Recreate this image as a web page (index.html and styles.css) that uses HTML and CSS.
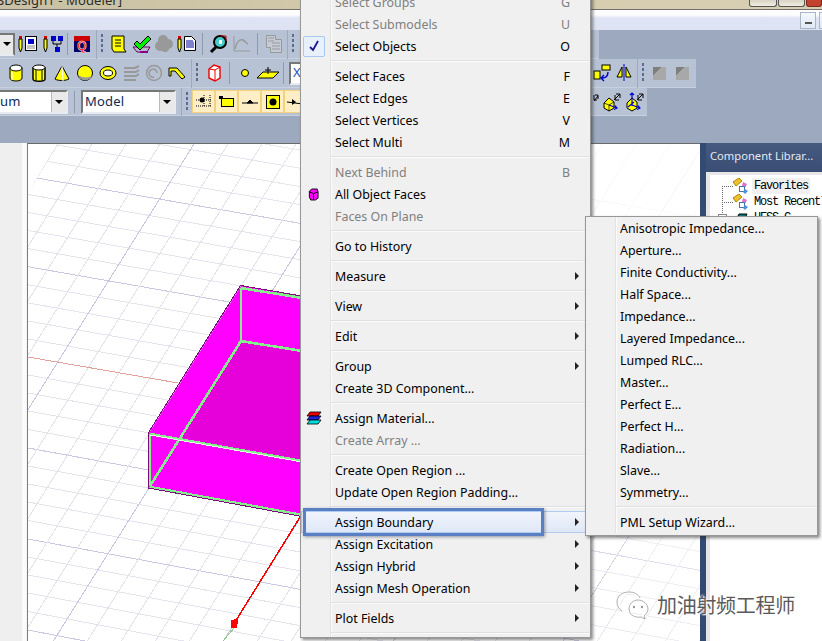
FILE: index.html
```html
<!DOCTYPE html>
<html lang="en">
<head>
<meta charset="utf-8">
<title>HFSS Modeler</title>
<link rel="stylesheet" href="styles.css">
</head>
<body>
<div class="app">
  <header class="titlebar">
    <span class="title-text">SDesign1 - Modeler]</span>
    <div class="win-btns"><i class="win-btn"></i><i class="win-btn wide"></i><i class="win-btn close"></i></div>
  </header>
  <div class="menustrip">
    <div class="mdi-btn"><i class="mdi-dash"></i></div><div class="mdi-btn"></div>
  </div>
  <div class="toolarea">
    <div class="tb-row r1">
      <div class="band b1">
        <div class="combo c0"><span class="drop"><i class="tri"></i></span></div>
        <span class="cell"><svg class="ic" viewBox="0 0 20 20"><rect x="1" y="2" width="3" height="3" fill="#d00"/><path d="M1 5h3v9l-1.500 4L1 14z" fill="#ff0" stroke="#000"/><rect x="7.500" y="2.500" width="11" height="14" fill="#fff" stroke="#000"/><rect x="10" y="5" width="6" height="5" fill="#00c"/><path d="M9 12h8M9 14h8" stroke="#888"/></svg></span>
        <span class="cell"><svg class="ic" viewBox="0 0 20 20"><rect x="1" y="2" width="3" height="3" fill="#d00"/><path d="M1 5h3v9l-1.500 4L1 14z" fill="#ff0" stroke="#000"/><path d="M10 7v3h8V7M14 10v4" fill="none" stroke="#000"/><rect x="8" y="2" width="5" height="5" fill="#00c"/><rect x="15" y="2" width="5" height="5" fill="#00c"/><rect x="12" y="13" width="5" height="5" fill="#00c"/></svg></span>
        <span class="sep s4"></span>
        <span class="cell"><svg class="ic" viewBox="0 0 20 20"><rect x="2" y="2" width="16" height="16" fill="#006"/><rect x="2" y="2" width="16" height="5" fill="#c00"/><text x="10" y="15.500" class="q-glyph">Q</text></svg></span>
      </div>
      <div class="band b2">
        <span class="grip g9"></span>
        <span class="cell"><svg class="ic" viewBox="0 0 20 20"><path d="M4 2h12v13l2 3H6l-2-3z" fill="#ff0" stroke="#000"/><path d="M7 6h6M7 9h6M7 12h6" stroke="#000"/></svg></span>
        <span class="cell"><svg class="ic" viewBox="0 0 20 20"><path d="M2 13l4 5h10l3-5z" fill="#b9b9c9" stroke="#606"/><path d="M3 10l3-3 3 3 8-8 3 3-11 11z" fill="#0e0" stroke="#000"/><path d="M9 18h8" stroke="#808" stroke-width="2"/></svg></span>
        <span class="cell"><svg class="ic" viewBox="0 0 20 20"><g fill="#999"><circle cx="9" cy="6" r="5"/><circle cx="14" cy="10" r="5"/><circle cx="6" cy="12" r="5"/><circle cx="11" cy="14" r="4"/></g></svg></span>
        <span class="cell"><svg class="ic" viewBox="0 0 20 20"><rect x="1" y="2" width="3" height="3" fill="#d00"/><path d="M1 5h3v9l-1.500 4L1 14z" fill="#ff0" stroke="#000"/><path d="M7.500 2.500h7l4 4v10h-11z" fill="#fff" stroke="#000"/><path d="M9 7h7M9 9h8M9 11h8M9 13h8" stroke="#009"/></svg></span>
        <span class="sep s8"></span>
        <span class="cell"><svg class="ic" viewBox="0 0 20 20"><path d="M3 18l5-5" stroke="#000" stroke-width="3"/><circle cx="12" cy="8" r="6" fill="#4cc" stroke="#000" stroke-width="2"/><path d="M12 2h6v5" fill="none" stroke="#a00"/><rect x="11" y="6" width="3" height="4" fill="#fff"/></svg></span>
        <span class="cell"><svg class="ic" viewBox="0 0 20 20"><path d="M3 2v15h16" fill="none" stroke="#999"/><path d="M4 15c2-9 6-10 8-9s3 3 5 4" fill="none" stroke="#999" stroke-width="1.500"/></svg></span>
        <span class="sep s10"></span>
        <span class="cell"><svg class="ic" viewBox="0 0 20 20"><path d="M2.500 1.500h9v4h6v13h-11v-5h-4z" fill="#c5cbd6" stroke="#999"/><path d="M4 4h6M4 7h6M8 9h8M8 12h8M8 15h8" stroke="#999"/></svg></span>
      </div>
      <div class="band b2b"><span class="grip g10"></span></div>
    </div>
    <div class="tb-row r2">
      <div class="band b3">
        <span class="cell"><svg class="ic" viewBox="0 0 20 20"><path d="M4 5v10c0 4 12 4 12 0V5z" fill="#ff0" stroke="#000"/><ellipse cx="10" cy="5" rx="6" ry="3" fill="#fff" stroke="#000"/><path d="M6 9v8" stroke="#fff"/></svg></span>
        <span class="cell"><svg class="ic" viewBox="0 0 20 20"><path d="M4 5v11c0 3 12 3 12 0V5z" fill="#ff0" stroke="#000" stroke-width="1.500"/><ellipse cx="10" cy="4.500" rx="6" ry="2.500" fill="#fff" stroke="#000"/><path d="M7 7v11M13 7v11" stroke="#000"/></svg></span>
        <span class="cell"><svg class="ic" viewBox="0 0 20 20"><path d="M10 3L3 16c3 2 10 2 14 0z" fill="#ff0" stroke="#000"/><path d="M10 3l1 15" stroke="#fff"/></svg></span>
        <span class="cell"><svg class="ic" viewBox="0 0 20 20"><circle cx="10" cy="10" r="7.500" fill="#ff0" stroke="#000"/><path d="M3 12c2 7 12 7 14 1-4 2-10 2-14-1z" fill="#999"/></svg></span>
        <span class="cell"><svg class="ic" viewBox="0 0 20 20"><ellipse cx="10" cy="10" rx="8" ry="6.500" fill="#ff0" stroke="#000"/><ellipse cx="10" cy="10" rx="4.500" ry="3" fill="#fff" stroke="#000"/></svg></span>
        <span class="cell"><svg class="ic" viewBox="0 0 20 20"><path d="M3 5h11l4-2M3 9h12l3-2M3 13h12l3-2M3 17h12" fill="none" stroke="#999" stroke-width="2"/></svg></span>
        <span class="cell"><svg class="ic" viewBox="0 0 20 20"><circle cx="10" cy="10" r="7.500" fill="none" stroke="#999" stroke-width="1.500"/><path d="M10 14a4 4 0 1 1 3-4" fill="none" stroke="#999" stroke-width="1.500"/></svg></span>
        <span class="cell"><svg class="ic" viewBox="0 0 20 20"><path d="M2 5h8l8 9-3 2-7-8H4v5H2z" fill="#ff0" stroke="#000"/></svg></span>
      </div>
      <div class="band b4">
        <span class="grip g10"></span>
        <span class="cell"><svg class="ic" viewBox="0 0 20 20"><path d="M5 6l5-4 6 2v11l-5 3-6-3z" fill="#fff" stroke="#e00" stroke-width="1.400"/><path d="M11 7v11M5 6l6 1 5-3" fill="none" stroke="#e00"/></svg></span>
        <span class="sep s8"></span>
        <span class="cell"><svg class="ic" viewBox="0 0 20 20"><circle cx="10" cy="10" r="3.500" fill="#ff0" stroke="#000"/></svg></span>
        <span class="cell"><svg class="ic wide-ic" viewBox="0 0 24 20"><path d="M1 15l6-6h16l-6 6z" fill="#ff0" stroke="#000"/><path d="M12 11V4M9 7h6" stroke="#000"/></svg></span>
        <span class="sep s8"></span>
        <div class="coord">X</div>
        <div class="band-end">
          <span class="cell"><svg class="ic" viewBox="0 0 20 20"><rect x="3" y="8" width="6" height="8" fill="#ff0" stroke="#000"/><rect x="11" y="2" width="8" height="5" fill="#ff0" stroke="#000"/><path d="M17 9c0 4-2 6-6 6m2-3l-3 3 3 3" fill="none" stroke="#00c" stroke-width="1.400"/></svg></span>
          <span class="cell"><svg class="ic" viewBox="0 0 20 20"><path d="M8 4v10H3z" fill="#ff0" stroke="#000"/><path d="M12 4v10h5z" fill="#ff0" stroke="#000"/><path d="M10 1v17" stroke="#00c"/></svg></span>
        </div>
      </div>
      <div class="band b5">
        <span class="grip g10"></span>
        <span class="cell"><i class="gray-sq"></i></span>
        <span class="cell"><i class="gray-sq"></i></span>
      </div>
    </div>
    <div class="tb-row r3">
      <div class="band b6">
        <div class="combo c1"><span class="combo-text">um</span><span class="drop"><i class="tri"></i></span></div>
        <span class="sep s13"></span>
        <div class="combo c2"><span class="combo-text">Model</span><span class="drop"><i class="tri"></i></span></div>
      </div>
      <div class="band b7">
        <span class="grip g10"></span>
        <span class="ybtn"><svg class="ic" viewBox="0 0 20 20"><path d="M2 8h16M10 3v12M2 14h16M16 3v12" stroke="#000" stroke-dasharray="1 1" fill="none"/><circle cx="8" cy="8" r="2.500" fill="#000"/></svg></span>
        <span class="ybtn"><svg class="ic" viewBox="0 0 20 20"><rect x="4.500" y="6.500" width="12" height="8" fill="#ff0" stroke="#000"/><rect x="2" y="4" width="4" height="3" fill="#000"/></svg></span>
        <span class="ybtn"><svg class="ic" viewBox="0 0 20 20"><path d="M2 11h16" stroke="#000"/><path d="M7 11l3-3 3 3z" fill="#000" stroke="#000"/></svg></span>
        <span class="ybtn"><svg class="ic" viewBox="0 0 20 20"><rect x="3.500" y="3.500" width="13" height="13" fill="#ff0" stroke="#000"/><circle cx="10" cy="10" r="3.500" fill="#000"/></svg></span>
        <span class="ybtn"><svg class="ic" viewBox="0 0 20 20"><path d="M1 10l16 2" stroke="#000"/><path d="M6 7l4 3-4 3z" fill="#000"/></svg></span>
        <div class="band-end">
          <span class="cell"><svg class="ic" viewBox="0 0 20 20"><path d="M15 9l4-5M16 3h3v4M15 3v5h3" fill="none" stroke="#000"/></svg></span>
          <span class="cell"><svg class="ic" viewBox="0 0 20 20"><path d="M2 11l5-5 5 4v6l-5 3-5-3z" fill="#ff0" stroke="#000"/><path d="M2 11l5 2 5-3M7 13v6" fill="none" stroke="#000" stroke-width=".7"/><path d="M7 13l8 3m-3 1.500l3-1.500-2-2.500" fill="none" stroke="#00c" stroke-width="1.200"/><path d="M12 8l6-6M14 2h4v4M13 3v5h4" fill="none" stroke="#000"/></svg></span>
          <span class="cell"><svg class="ic" viewBox="0 0 20 20"><path d="M2 11l5-5 5 4v6l-5 3-5-3z" fill="#ff0" stroke="#000"/><path d="M7 1v13M5 3l2-2 2 2M7 13l8 3m-3 1.500l3-1.500-2-2.500M3 15l6-5" fill="none" stroke="#00c" stroke-width="1.200"/><path d="M12 8l6-6M14 2h4v4M13 3v5h4" fill="none" stroke="#000"/></svg></span>
        </div>
      </div>
    </div>
  </div>
  <main class="workspace">
    <div class="left-strip"></div>
    <div class="viewport">
      <svg class="scene" viewBox="28 144 672 497" width="672" height="497">
        <defs>
          <clipPath id="grid-clip"><path d="M57 144L28 193V641H700V144z"/></clipPath>
          <linearGradient id="fade" gradientUnits="userSpaceOnUse" x1="330" y1="330" x2="620" y2="150"><stop offset="0" stop-color="#fff" stop-opacity="0"/><stop offset="1" stop-color="#fff" stop-opacity=".85"/></linearGradient>
        </defs>
        <g clip-path="url(#grid-clip)" fill="none">
          <path class="grid-light" d="M28 104L700 217.600M28 122L700 236.200M28 140L700 254.900M28 158L700 273.200M28 194.500L700 310.800M28 212.500L700 329.100M28 230.500L700 347.400M28 248.600L700 366.200M28 284.800L700 403.100M28 302.900L700 421.800M28 321L700 440.600M28 339L700 459M28 375L700 495.600M28 393L700 514M28 411L700 532.600M28 429.500L700 551.500M28 466L700 589M28 484L700 607.300M28 502L700 625.600M28 520.500L700 644.800M28 557L700 682M28 575L700 700M28 593L700 719M28 611.500L700 739"/>
          <path class="grid-dark" d="M28 176.500L700 292.100M28 266.700L700 384.600M178 383L700 477.300M28 448L700 570.300M28 539L700 663.300M28 630L700 760"/>
          <path class="grid-light" d="M58 144L-252.600 641M92 144L-218.600 641M126 144L-184.600 641M160 144L-150.600 641M228 144L-82.600 641M262 144L-48.600 641M296 144L-14.600 641M330 144L19.400 641M398 144L87.400 641M432 144L121.400 641M466 144L155.400 641M500 144L189.400 641M568 144L257.400 641M602 144L291.400 641M636 144L325.400 641M670 144L359.400 641M738 144L427.400 641M772 144L461.400 641M806 144L495.400 641M840 144L529.400 641M908 144L597.400 641M942 144L631.400 641M976 144L665.400 641M1010 144L699.400 641"/>
          <path class="grid-dark" d="M194 144L-116.600 641M364 144L53.400 641M534 144L223.400 641M704 144L393.400 641M874 144L563.400 641"/>
          <path class="axis-pink" d="M28 357L178 383"/>
          <rect x="28" y="144" width="672" height="497" fill="url(#fade)"/>
        </g>
        <path class="axis-green" d="M234 628L223 641"/>
        <path class="axis-red" d="M235 622L302 514"/>
        <path class="marker" d="M231 620h3v-1h3l1 1v3l-1 2v3h-6z"/>
        <path class="face-bright" d="M149 433L241 286L302 296V516L149 487z"/>
        <path class="face-dark" d="M241 341L302 351V460L180 438z"/>
        <path class="edge-green" d="M150 486L241 341V288M241 341L302 351M150 486V434M150 487L302 515M241 288L302 298"/>
        <path class="edge-green" d="M150 434L302 461"/>
        <path class="edge-white" d="M150 435L302 462"/>
        <path class="edge-purple" d="M148.500 487.500V432.500L240.500 285.500L302 296M148.500 488L302 516.500"/>
      </svg>
    </div>
    <aside class="panel">
      <div class="panel-head">Component Librar...</div>
      <div class="panel-body">
        <div class="tree">
          <div class="tree-row"><svg class="tree-ic" viewBox="0 0 40 16"><path class="dots" d="M10 8.500h11M10.500 8v8"/><path d="M21 4l6-4 3 3-6 5z" fill="#f0c030" stroke="#a80"/><path d="M31 4l4 2-2 4-3-2z" fill="#e070d0"/><rect x="27.500" y="8.500" width="5" height="5" fill="#fff" stroke="#47a"/><path d="M33 11l3 2-3 3-2-2z" fill="#5090e0"/></svg><span class="tree-text selected">Favorites</span></div>
          <div class="tree-row"><svg class="tree-ic" viewBox="0 0 40 16"><path class="dots" d="M10.500 0v16M10 8.500h11"/><path d="M21 4l6-4 3 3-6 5z" fill="#f0c030" stroke="#a80"/><path d="M31 4l4 2-2 4-3-2z" fill="#e070d0"/><rect x="27.500" y="8.500" width="5" height="5" fill="#fff" stroke="#47a"/><path d="M33 11l3 2-3 3-2-2z" fill="#5090e0"/></svg><span class="tree-text">Most Recentl</span></div>
          <div class="tree-row"><svg class="tree-ic" viewBox="0 0 40 16"><path class="dots" d="M10.500 0v4"/><rect x="6.500" y="4.500" width="8" height="8" fill="#fff" stroke="#888"/><path d="M27 4h8l-2 4h-8z" fill="#0a7a7a" stroke="#000"/></svg><span class="tree-text">HFSS C</span></div>
        </div>
      </div>
    </aside>
  </main>

  <div class="menu main-menu">
    <div class="mi dis"><span class="mi-ic"></span><span class="mi-label">Select Groups</span><span class="mi-key">G</span></div>
    <div class="mi dis"><span class="mi-ic"></span><span class="mi-label">Select Submodels</span><span class="mi-key">U</span></div>
    <div class="mi"><span class="mi-ic"><span class="check"><svg class="check-ic" viewBox="0 0 12 12"><path d="M2 7l3 3 5-9" fill="none" stroke="#1a1a8c" stroke-width="1.800"/></svg></span></span><span class="mi-label">Select Objects</span><span class="mi-key">O</span></div>
    <div class="ms"></div>
    <div class="mi"><span class="mi-ic"></span><span class="mi-label">Select Faces</span><span class="mi-key">F</span></div>
    <div class="mi"><span class="mi-ic"></span><span class="mi-label">Select Edges</span><span class="mi-key">E</span></div>
    <div class="mi"><span class="mi-ic"></span><span class="mi-label">Select Vertices</span><span class="mi-key">V</span></div>
    <div class="mi"><span class="mi-ic"></span><span class="mi-label">Select Multi</span><span class="mi-key">M</span></div>
    <div class="ms"></div>
    <div class="mi dis"><span class="mi-ic"></span><span class="mi-label">Next Behind</span><span class="mi-key">B</span></div>
    <div class="mi"><span class="mi-ic"><svg class="face-ic" viewBox="0 0 12 14"><path d="M1.500 3.500L4 1h6l1 3v7l-3 2H3l-1.500-3z" fill="#f0f" stroke="#000"/><path d="M1.500 4L6 6l5-2M6 6v7" fill="none" stroke="#000"/></svg></span><span class="mi-label">All Object Faces</span></div>
    <div class="mi dis"><span class="mi-ic"></span><span class="mi-label">Faces On Plane</span></div>
    <div class="ms"></div>
    <div class="mi"><span class="mi-ic"></span><span class="mi-label">Go to History</span></div>
    <div class="ms"></div>
    <div class="mi"><span class="mi-ic"></span><span class="mi-label">Measure</span><i class="arrow"></i></div>
    <div class="ms"></div>
    <div class="mi"><span class="mi-ic"></span><span class="mi-label">View</span><i class="arrow"></i></div>
    <div class="ms"></div>
    <div class="mi"><span class="mi-ic"></span><span class="mi-label">Edit</span><i class="arrow"></i></div>
    <div class="ms"></div>
    <div class="mi"><span class="mi-ic"></span><span class="mi-label">Group</span><i class="arrow"></i></div>
    <div class="mi"><span class="mi-ic"></span><span class="mi-label">Create 3D Component...</span></div>
    <div class="ms"></div>
    <div class="mi"><span class="mi-ic"><svg class="mat-ic" viewBox="0 0 16 14"><path d="M4 1h11l-3 4H1z" fill="#e00" stroke="#000" stroke-width=".8"/><path d="M4 5h11l-3 4H1z" fill="#22d" stroke="#000" stroke-width=".8"/><path d="M4 9h11l-3 4H1z" fill="#0dd" stroke="#000" stroke-width=".8"/></svg></span><span class="mi-label">Assign Material...</span></div>
    <div class="mi dis"><span class="mi-ic"></span><span class="mi-label">Create Array ...</span></div>
    <div class="ms"></div>
    <div class="mi"><span class="mi-ic"></span><span class="mi-label">Create Open Region ...</span></div>
    <div class="mi"><span class="mi-ic"></span><span class="mi-label">Update Open Region Padding...</span></div>
    <div class="ms"></div>
    <div class="mi hot"><span class="mi-ic"></span><span class="mi-label">Assign Boundary</span><i class="arrow"></i></div>
    <div class="mi"><span class="mi-ic"></span><span class="mi-label">Assign Excitation</span><i class="arrow"></i></div>
    <div class="mi"><span class="mi-ic"></span><span class="mi-label">Assign Hybrid</span><i class="arrow"></i></div>
    <div class="mi"><span class="mi-ic"></span><span class="mi-label">Assign Mesh Operation</span><i class="arrow"></i></div>
    <div class="ms"></div>
    <div class="mi"><span class="mi-ic"></span><span class="mi-label">Plot Fields</span><i class="arrow"></i></div>
    <div class="ms"></div>
  </div>

  <div class="menu sub-menu">
    <div class="mi"><span class="mi-ic"></span><span class="mi-label">Anisotropic Impedance...</span></div>
    <div class="mi"><span class="mi-ic"></span><span class="mi-label">Aperture...</span></div>
    <div class="mi"><span class="mi-ic"></span><span class="mi-label">Finite Conductivity...</span></div>
    <div class="mi"><span class="mi-ic"></span><span class="mi-label">Half Space...</span></div>
    <div class="mi"><span class="mi-ic"></span><span class="mi-label">Impedance...</span></div>
    <div class="mi"><span class="mi-ic"></span><span class="mi-label">Layered Impedance...</span></div>
    <div class="mi"><span class="mi-ic"></span><span class="mi-label">Lumped RLC...</span></div>
    <div class="mi"><span class="mi-ic"></span><span class="mi-label">Master...</span></div>
    <div class="mi"><span class="mi-ic"></span><span class="mi-label">Perfect E...</span></div>
    <div class="mi"><span class="mi-ic"></span><span class="mi-label">Perfect H...</span></div>
    <div class="mi"><span class="mi-ic"></span><span class="mi-label">Radiation...</span></div>
    <div class="mi"><span class="mi-ic"></span><span class="mi-label">Slave...</span></div>
    <div class="mi"><span class="mi-ic"></span><span class="mi-label">Symmetry...</span></div>
    <div class="ms"></div>
    <div class="mi"><span class="mi-ic"></span><span class="mi-label">PML Setup Wizard...</span></div>
  </div>

  <div class="callout"></div>

  <div class="watermark">
    <svg class="wechat" viewBox="0 0 34 32"><g fill="none" stroke="#fff" stroke-width="2.500"><ellipse cx="13" cy="13" rx="11" ry="9.500"/><ellipse cx="22" cy="20" rx="10" ry="8.500"/></g><g fill="none" stroke="#999" stroke-width=".8"><path d="M6 22c-3-2-5-5-5-9C1 7 6 3 13 3c5 0 9 2 11 6"/><path d="M13 20c0-5 4-9 9-9s10 4 10 9c0 3-2 5-4 7l1 3-4-2c-6 1-12-2-12-8z"/></g><g fill="#999"><circle cx="18" cy="18" r="1.200"/><circle cx="26" cy="18" r="1.200"/></g><g fill="#fff"><circle cx="9" cy="10" r="1.500"/><circle cx="17" cy="10" r="1.500"/></g></svg>
    <span class="wm-text">加油射频工程师</span>
  </div>
</div>
</body>
</html>
```
FILE: styles.css
```css
* { box-sizing: border-box; }
html, body { margin: 0; padding: 0; width: 100%; height: 100%; overflow: hidden; }
body { font-family: "Noto Sans", "Open Sans", sans-serif; font-size: 13px; color: #000; }
i { display: block; font-style: normal; }

.app { position: relative; width: 822px; height: 641px; overflow: hidden; display: flex; flex-direction: column; background: #9ca9bf; }

.titlebar { height: 10px; flex: none; display: flex; justify-content: space-between; overflow: hidden; background: linear-gradient(90deg, #c9c1a3, #d6ccae 60%, #d8cfb2); border-bottom: 1px solid #6f6f6f; }
.title-text { font-size: 13px; line-height: 9px; margin-top: -4px; margin-left: -3px; color: #2b2b2b; white-space: nowrap; letter-spacing: .1px; }
.win-btns { display: flex; gap: 1px; height: 7px; margin-right: 0; }
.win-btn { width: 28px; height: 7px; background: linear-gradient(#d8d4c4, #efece0); border: 1px solid #555; border-top: 0; border-radius: 0 0 3px 3px; }
.win-btn.wide { width: 27px; }
.win-btn.close { width: 16px; background: #c2422e; border-color: #7d2a1c; }

.menustrip { height: 20px; flex: none; display: flex; justify-content: flex-end; gap: 3px; padding: 2px 0 1px; background: linear-gradient(#fefefe 0, #fdfdff 25%, #dfe4f4 40%, #dde3f3 100%); }
.mdi-btn { width: 16px; height: 17px; border: 1px solid #a9b6c8; background: linear-gradient(#f4f8fd, #dfe9f5); display: flex; align-items: flex-end; justify-content: center; padding-bottom: 4px; }
.mdi-btn:last-child { width: 3px; border-right: 0; }
.mdi-dash { width: 7px; height: 2px; background: #555; }

.toolarea { height: 113px; flex: none; background: #9ca9bf; }
.tb-row { display: flex; gap: 1px; }
.r1 { height: 29px; }
.r2 { height: 29px; }
.r3 { height: 28px; }
.band { display: flex; align-items: center; background: #b7c2d4; border-bottom: 1px solid #c7d0de; }
.b1 { width: 96px; }
.b2 { width: 190px; }
.b2b { width: 311px; padding-left: 0; }
.b3 { width: 191px; padding-left: 4px; }
.b4 { width: 445px; }
.b5 { width: 58px; }
.b6 { width: 181px; }
.b7 { width: 465px; }
.band-end { margin-left: auto; display: flex; padding-right: 2px; }
.b7 .band-end { padding-right: 1px; }
.cell { width: 23px; height: 23px; flex: none; display: flex; align-items: center; justify-content: center; }
.b1 .cell { width: 25px; }
.ic { width: 20px; height: 20px; display: block; flex: none; }
.ic.wide-ic { width: 24px; }
.q-glyph { font: bold 12px "Liberation Sans", sans-serif; fill: #e00; stroke: #fff; stroke-width: .5px; text-anchor: middle; }
.sep { flex: none; display: flex; justify-content: center; height: 22px; }
.sep::before { content: ""; width: 1px; height: 100%; background: #8d9ab0; }
.s4 { width: 4px; }
.s8 { width: 8px; }
.s10 { width: 10px; }
.s13 { width: 13px; }
.grip { flex: none; height: 20px; display: flex; justify-content: center; }
.grip::before { content: ""; width: 2px; height: 100%; background: repeating-linear-gradient(#5b6c92 0, #5b6c92 3px, transparent 3px, transparent 5px); }
.g9 { width: 9px; }
.g10 { width: 10px; }
.gray-sq { width: 13px; height: 13px; background: linear-gradient(135deg, #7f7f7f 0, #7f7f7f 32%, #a8a8a8 33%); }
.coord { flex: none; width: 60px; height: 23px; margin-left: 2px; padding-left: 2px; background: #fff; border: 2px solid #777; border-right: 0; border-bottom-color: #e8ecf2; color: #1d4fb8; font-size: 13px; line-height: 17px; }

.combo { flex: none; height: 24px; background: #fff; border: 2px solid #777; border-right-color: #e8ecf2; border-bottom-color: #e8ecf2; display: flex; align-items: center; justify-content: space-between; overflow: hidden; }
.c0 { width: 15px; height: 23px; border-left: 0; border-right-color: #777; justify-content: flex-end; }
.c1 { width: 68px; border-left: 0; }
.c2 { width: 95px; margin-left: 0; }
.combo-text { padding-left: 2px; margin-top: -2px; font-size: 13px; color: #0a2a55; letter-spacing: .2px; }
.c1 .combo-text { padding-left: 0; }
.drop { width: 15px; height: 20px; flex: none; background: #e9e9e9; border-left: 1px solid #bbb; display: flex; align-items: center; justify-content: center; }
.c0 .drop { border-left: 0; width: 13px; }
.tri { width: 0; height: 0; border-left: 4px solid transparent; border-right: 4px solid transparent; border-top: 4px solid #000; }
.ybtn { width: 23px; height: 23px; flex: none; background: #fdeec6; border: 1px solid #f3d27e; display: flex; align-items: center; justify-content: center; }

.workspace { flex: 1; min-height: 0; display: flex; }
.left-strip { width: 27px; flex: none; background: linear-gradient(90deg, #efefef 0, #efefef 22px, #fbfbfb 22px); border-right: 1px solid #f4f4f4; }
.viewport { width: 673px; flex: none; background: #fff; border-left: 1px solid #7d7d7d; border-top: 1px solid #6a6a6a; overflow: hidden; }
.scene { display: block; }
.grid-light { stroke: #e6e3ef; stroke-width: 1; shape-rendering: crispEdges; }
.grid-dark { stroke: #cdc8e2; stroke-width: 1; shape-rendering: crispEdges; }
.axis-pink { stroke: #e3a19c; stroke-width: 1; fill: none; shape-rendering: crispEdges; }
.axis-green { stroke: #8fc88f; stroke-width: 1; fill: none; shape-rendering: crispEdges; }
.axis-red { stroke: #ff0000; stroke-width: 1.500; fill: none; shape-rendering: crispEdges; }
.marker { fill: #ff0000; shape-rendering: crispEdges; }
.face-bright { fill: #ff00ff; }
.face-dark { fill: #e600d9; }
.edge-green { stroke: #86f08c; stroke-width: 2.600; fill: none; shape-rendering: crispEdges; }
.edge-white { stroke: #e8f8e8; stroke-width: 1; fill: none; shape-rendering: crispEdges; }
.edge-purple { stroke: #7c0a7c; stroke-width: 1; fill: none; shape-rendering: crispEdges; }

.panel { flex: 1; min-width: 0; display: flex; flex-direction: column; background: linear-gradient(90deg, #334a72 0, #334a72 6px, #e6e6e6 6px, #e6e6e6 10px, #fff 10px); }
.panel-head { height: 29px; flex: none; margin-left: 6px; padding-left: 4px; line-height: 26px; font-size: 11.200px; color: #e4ebf5; background: linear-gradient(#46597f, #3a4d74); white-space: nowrap; }
.panel-body { flex: 1; margin-left: 6px; padding: 1px 0 0 4px; border-top: 3px solid #e6e6e6; overflow: hidden; }
.tree { padding-top: 2px; margin-left: 2px; }
.tree-row { height: 16px; display: flex; align-items: center; }
.tree-ic { width: 40px; height: 16px; flex: none; display: block; }
.dots { stroke: #666; stroke-dasharray: 1 1; fill: none; }
.tree-text { font: 12px/16px "Liberation Mono", monospace; letter-spacing: -1.200px; padding: 0 2px; white-space: nowrap; color: #000; }
.tree-text.selected { background: #f0f0f0; }

.menu { position: absolute; background: #f0f0f0; border: 1px solid #979797; box-shadow: 2px 2px 3px rgba(40, 40, 40, .55); }
.main-menu { left: 300px; top: -10px; width: 291px; padding-right: 1px; }
.sub-menu { left: 585px; top: 216px; width: 233px; padding-bottom: 2px; }
.mi { height: 22px; display: flex; align-items: center; white-space: nowrap; }
.mi-ic { width: 30px; height: 22px; flex: none; padding-right: 4px; border-right: 1px solid #e2e2e2; box-shadow: 1px 0 0 #fbfbfb; display: flex; align-items: center; justify-content: center; }
.mi-label { padding-left: 4px; font-size: 12.400px; flex: 1; }
.mi-key { width: 20px; margin-right: 19px; text-align: right; font-size: 12.400px; }
.arrow { width: 0; height: 0; margin-right: 10px; border-top: 4px solid transparent; border-bottom: 4px solid transparent; border-left: 4px solid #222; }
.dis { color: #808080; }
.ms { height: 8px; display: flex; align-items: center; padding-left: 30px; background: linear-gradient(90deg, transparent 0, transparent 29px, #e2e2e2 29px, #e2e2e2 30px, #fbfbfb 30px, #fbfbfb 31px, transparent 31px); }
.ms::before { content: ""; display: block; width: 100%; height: 2px; background: linear-gradient(#e0e0e0 50%, #fbfbfb 50%); }
.hot { background: linear-gradient(#f2f5fb, #dee7f7); outline: 1px solid #aecbf0; outline-offset: -1px; }
.hot .mi-ic { border-right-color: transparent; box-shadow: none; }
.check { width: 22px; height: 21px; flex: none; background: #e8f0fc; border: 1px solid #a8c8f0; border-radius: 2px; display: flex; align-items: center; justify-content: center; }
.check-ic { width: 12px; height: 12px; display: block; }
.face-ic { width: 11px; height: 13px; display: block; }
.mat-ic { width: 16px; height: 14px; display: block; }

.callout { position: absolute; left: 303px; top: 508px; width: 241px; height: 28px; border: 3px solid #5a80c3; box-shadow: 1px 1px 3px rgba(80, 90, 110, .6); }

.watermark { position: absolute; left: 616px; top: 589px; display: flex; align-items: center; gap: 7px; }
.wechat { width: 34px; height: 32px; display: block; }
.wm-text { font: 20px/32px "Noto Sans CJK SC", sans-serif; color: #5a5a5a; letter-spacing: -.3px; text-shadow: 0 0 2px #fff, 0 0 2px #fff, 1px 1px 1px rgba(255,255,255,.9); white-space: nowrap; }
```
